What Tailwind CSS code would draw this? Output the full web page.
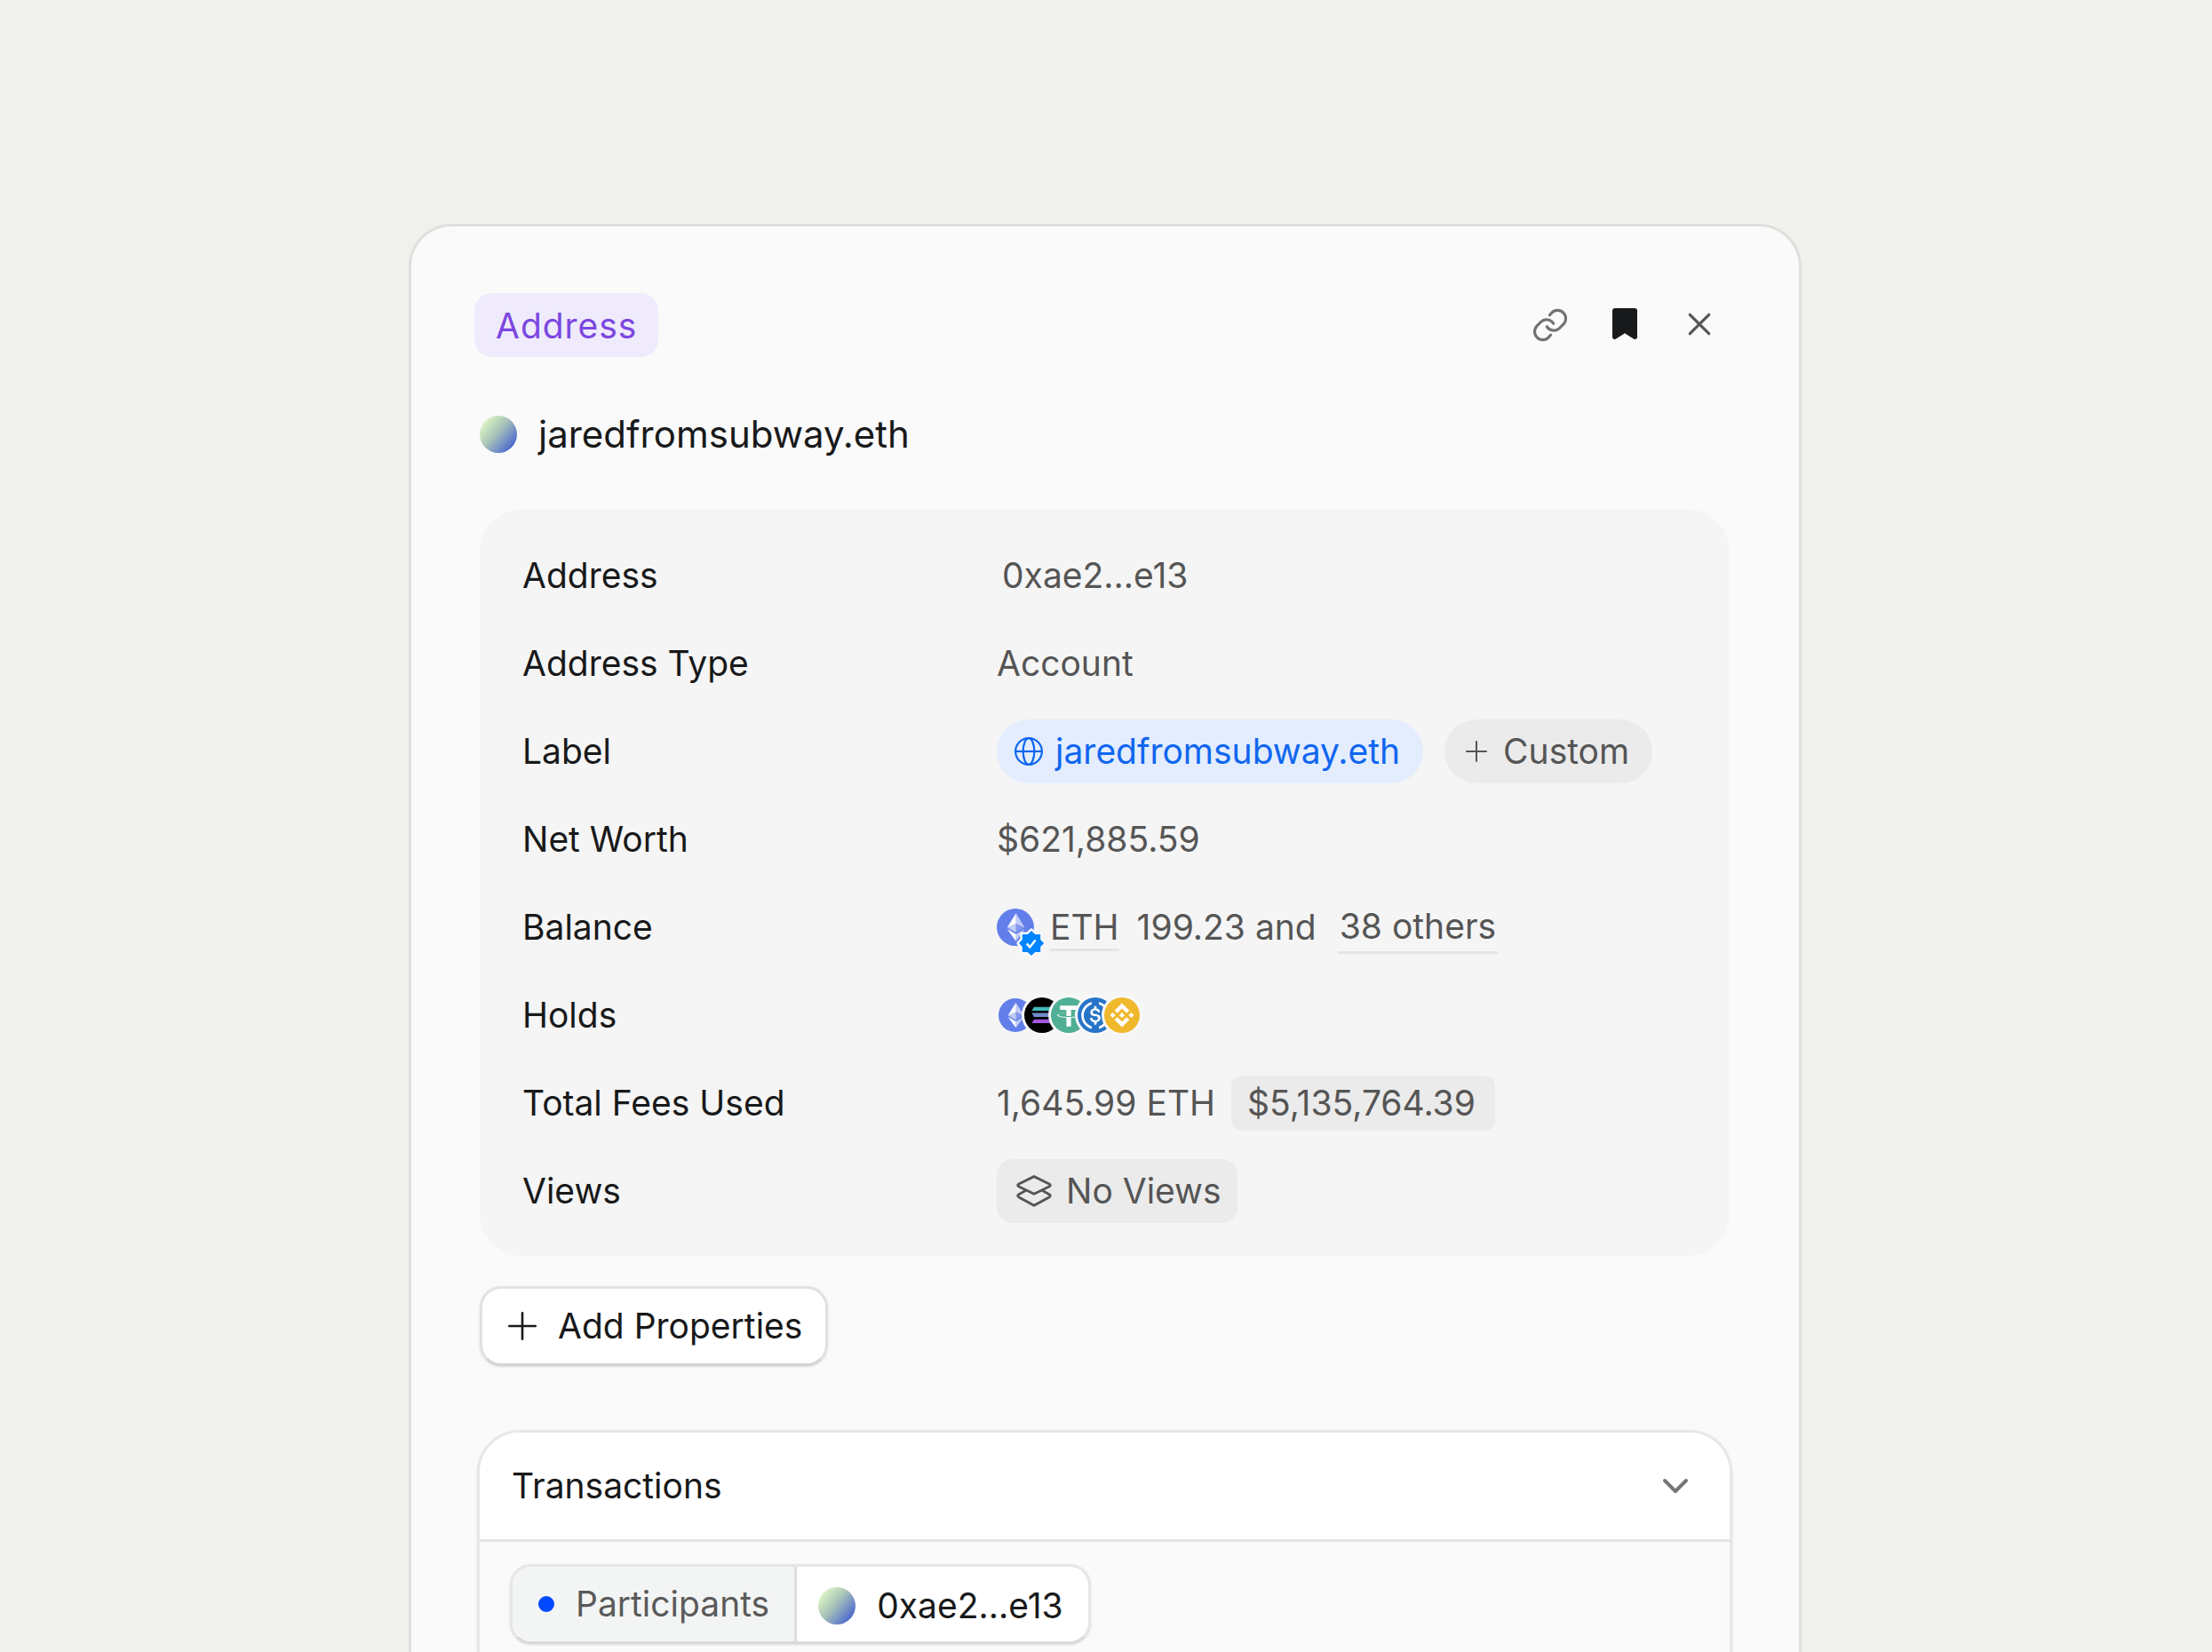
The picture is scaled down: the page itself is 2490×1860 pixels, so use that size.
<!DOCTYPE html>
<html lang="en">
<head>
<meta charset="utf-8">
<meta name="viewport" content="width=device-width, initial-scale=1">
<title>jaredfromsubway.eth</title>
<script src="https://cdn.jsdelivr.net/npm/@tailwindcss/browser@4"></script>
</head>
<body class="bg-[#f0f1ec] font-['Inter',sans-serif] text-[39px] leading-[48px] text-[#18191a]">

<!-- Shared icon shapes -->
<svg class="hidden" aria-hidden="true">
  <symbol id="eth" viewBox="0 0 32 32">
    <circle cx="16" cy="16" r="16" fill="#627eea"/>
    <g fill="#fff">
      <path fill-opacity=".602" d="M16.498 4v8.87l7.497 3.35z"/>
      <path d="M16.498 4L9 16.22l7.498-3.35z"/>
      <path fill-opacity=".602" d="M16.498 21.968v6.027L24 17.616z"/>
      <path d="M16.498 27.995v-6.028L9 17.616z"/>
      <path fill-opacity=".2" d="M16.498 20.573l7.497-4.353-7.497-3.348z"/>
      <path fill-opacity=".602" d="M9 16.22l7.498 4.353v-7.701z"/>
    </g>
  </symbol>
</svg>

<main class="flex h-screen justify-center overflow-hidden pt-[252px] pr-0.5">
  <article class="flex w-full max-w-[1568px] flex-col rounded-t-[48px] border-[3px] border-b-0 border-[#dfe0dc] bg-[#fafafa] pt-[75px] pr-[78px] pl-[77px]">

    <header class="-mr-2 -ml-1.5 flex items-center justify-between">
      <span class="flex h-[72px] items-center rounded-[20px] bg-[#efebfc] px-6 pt-0.5 tracking-wide text-[#7c47e0]">Address</span>
      <div class="flex">
        <button type="button" aria-label="Copy link" class="grid h-[72px] w-[84px] place-items-center text-[#727272]">
          <svg class="size-[38px]" viewBox="0 0 38.4 38.4" fill="none" stroke="currentColor" stroke-width="3.2" stroke-linecap="round">
            <path id="chain" d="M18.7 7.8l2.3-2.6a9.3 9.3 0 0 1 13.2 13.2l-4.500 4.400a9.300 9.300 0 0 1-14.200-1.800"/>
            <use href="#chain" transform="rotate(180 19.2 19.2)"/>
          </svg>
        </button>
        <button type="button" aria-label="Bookmark" class="grid h-[70px] w-[84px] place-items-center">
          <svg class="h-9 w-7" viewBox="0 0 28 36" fill="currentColor"><path d="M3 0h22a3 3 0 0 1 3 3v29.6c0 2-2 3.100-3.700 2.100L14 28.300 3.700 34.700C2 35.700 0 34.600 0 32.600V3a3 3 0 0 1 3-3z"/></svg>
        </button>
        <button type="button" aria-label="Close" class="grid h-[70px] w-[84px] place-items-center text-[#555]">
          <svg class="size-[26px]" viewBox="0 0 26 26" fill="none" stroke="currentColor" stroke-width="3.200" stroke-linecap="round"><path d="M2.300 2.300l21.400 21.400M23.700 2.300L2.300 23.700"/></svg>
        </button>
      </div>
    </header>

    <div class="mt-[60px] flex h-[54px] items-center gap-6">
      <span class="size-[42px] rounded-full bg-linear-[130deg] from-[#d9f2c4] from-15% via-[#a9c4b8] via-45% to-[#4460d0] to-90%"></span>
      <h1 class="text-[42px]">jaredfromsubway.eth</h1>
    </div>

    <dl class="mt-[57px] rounded-[48px] bg-[#f5f5f5] px-12 pt-[25px] pb-6">
      <div class="flex h-[99px] items-center">
        <dt class="w-[534px]">Address</dt>
        <dd class="pl-1.5 text-[#555]">0xae2...e13</dd>
      </div>
      <div class="flex h-[99px] items-center">
        <dt class="w-[534px]">Address Type</dt>
        <dd class="text-[#555]">Account</dd>
      </div>
      <div class="flex h-[99px] items-center">
        <dt class="w-[534px]">Label</dt>
        <dd class="flex gap-6">
          <a href="#" class="flex h-[72px] items-center gap-3.5 rounded-full bg-[#e3edfd] pr-[26px] pl-5 text-[#0f66f0]">
            <svg class="size-8" viewBox="0 0 32 32" fill="none" stroke="currentColor" stroke-width="2.200"><circle cx="16" cy="16" r="14.900"/><ellipse cx="16" cy="16" rx="6.300" ry="14.900"/><path d="M1 16h30"/></svg>
            jaredfromsubway.eth
          </a>
          <button type="button" class="flex h-[72px] items-center gap-[18px] rounded-full bg-[#ebebeb] pr-[26px] pl-6 text-[#555]">
            <svg class="size-6" viewBox="0 0 24 24" fill="none" stroke="currentColor" stroke-width="2" stroke-linecap="round"><path d="M12 1v22M1 12h22"/></svg>
            Custom
          </button>
        </dd>
      </div>
      <div class="flex h-[99px] items-center">
        <dt class="w-[534px]">Net Worth</dt>
        <dd class="text-[#555]">$621,885.59</dd>
      </div>
      <div class="flex h-[99px] items-center">
        <dt class="w-[534px]">Balance</dt>
        <dd class="flex items-center text-[#555]">
          <span class="relative">
            <svg class="size-[42px]"><use href="#eth"/></svg>
            <svg class="absolute top-[21px] left-[21px] size-9" viewBox="0 0 36 36">
              <path d="M18 4l4.200 4h6v6l4 4-4 4.100v6h-6L18 32l-4.200-3.900h-6v-6L4 18l3.800-4V8h6z" fill="#0085ff" stroke="#fafafa" stroke-width="5" stroke-linejoin="round" paint-order="stroke"/>
              <path d="M12.800 18.400l3.400 4 6.400-8" fill="none" stroke="#fff" stroke-width="2.400"/>
            </svg>
          </span>
          <a href="#" class="mt-1 ml-[18px] border-b-[3px] border-[#e2e5e4]">ETH</a>
          <span class="ml-5">199.23 and</span>
          <a href="#" class="mt-1.5 ml-6 border-b-[3px] border-[#e2e5e4] px-0.5 pb-1">38 others</a>
        </dd>
      </div>
      <div class="flex h-[99px] items-center">
        <dt class="w-[534px]">Holds</dt>
        <dd class="flex items-center">
          <svg class="ml-0.5 size-[38px]" role="img" aria-label="Ethereum"><use href="#eth"/></svg>
          <svg class="-ml-3 size-[46px]" viewBox="-3 -3 46 46" role="img" aria-label="Solana">
            <circle cx="20" cy="20" r="23" fill="#f8f8f8"/><circle cx="20" cy="20" r="20"/>
            <path d="M11 10.700h20.500l-2.600 4.300H8.400z" fill="#3fb9b8"/>
            <path d="M8.400 17.400h20.500l2.600 4.500H11z" fill="#718ccc"/>
            <path d="M11 24.700h20.500l-2.600 4.300H8.400z" fill="#a557e2"/>
          </svg>
          <svg class="-ml-4 size-[46px]" viewBox="-2.400 -2.400 36.800 36.800" role="img" aria-label="Tether">
            <circle cx="16" cy="16" r="18.400" fill="#f8f8f8"/><circle cx="16" cy="16" r="16" fill="#50af95"/>
            <path fill="#fff" transform="translate(-.9 -.9) scale(1.060)" d="M17.922 17.383v-.002c-.11.008-.677.042-1.942.042-1.010 0-1.721-.03-1.971-.042v.003c-3.888-.171-6.790-.848-6.790-1.658 0-.809 2.902-1.486 6.790-1.660v2.644c.254.018.982.061 1.988.061 1.207 0 1.812-.05 1.925-.06v-2.643c3.880.173 6.775.85 6.775 1.658 0 .81-2.895 1.485-6.775 1.657m0-3.590v-2.366h5.414V7.819H8.595v3.608h5.414v2.365c-4.400.202-7.709 1.074-7.709 2.118 0 1.044 3.309 1.915 7.709 2.118v7.582h3.913v-7.584c4.393-.202 7.694-1.073 7.694-2.116 0-1.043-3.301-1.914-7.694-2.117"/>
          </svg>
          <svg class="-ml-4 size-[46px]" viewBox="-2.400 -2.400 36.800 36.800" role="img" aria-label="USD Coin">
            <circle cx="16" cy="16" r="18.400" fill="#f8f8f8"/><circle cx="16" cy="16" r="16" fill="#2775c9"/>
            <g fill="#fff" transform="translate(-2.400 -2.200) scale(1.150)">
              <path d="M20.022 18.124c0-2.124-1.280-2.852-3.840-3.156-1.828-.243-2.193-.728-2.193-1.578 0-.85.61-1.396 1.828-1.396 1.097 0 1.707.364 2.011 1.275a.458.458 0 0 0 .427.303h.975a.416.416 0 0 0 .427-.425v-.06a3.040 3.040 0 0 0-2.743-2.489V9.142c0-.243-.183-.425-.487-.486h-.915c-.243 0-.426.182-.487.486v1.396c-1.829.242-2.986 1.456-2.986 2.974 0 2.002 1.218 2.791 3.778 3.095 1.707.303 2.255.668 2.255 1.639 0 .97-.853 1.638-2.011 1.638-1.585 0-2.133-.667-2.316-1.578-.06-.242-.244-.364-.427-.364h-1.036a.416.416 0 0 0-.426.425v.06c.243 1.518 1.219 2.610 3.230 2.914v1.457c0 .242.183.425.487.485h.915c.243 0 .426-.182.487-.485V21.340c1.829-.303 3.047-1.578 3.047-3.217z"/>
              <path d="M12.892 24.497c-4.754-1.700-7.192-6.980-5.424-11.653.914-2.550 2.925-4.491 5.424-5.402.244-.121.365-.303.365-.607v-.85c0-.242-.121-.424-.365-.485-.061 0-.183 0-.244.06a10.895 10.895 0 0 0-7.130 13.717c1.096 3.400 3.717 6.010 7.130 7.102.244.121.488 0 .548-.243.061-.06.061-.122.061-.243v-.85c0-.182-.182-.424-.365-.546zm6.460-18.936c-.244-.122-.488 0-.548.242-.061.061-.061.122-.061.243v.85c0 .243.182.485.365.607 4.754 1.700 7.192 6.980 5.424 11.653-.914 2.550-2.925 4.491-5.424 5.402-.244.121-.365.303-.365.607v.85c0 .242.121.424.365.485.061 0 .183 0 .244-.06a10.895 10.895 0 0 0 7.130-13.717c-1.096-3.460-3.778-6.070-7.130-7.162z"/>
            </g>
          </svg>
          <svg class="-ml-4 size-[46px]" viewBox="-2.400 -2.400 36.800 36.800" role="img" aria-label="BNB">
            <circle cx="16" cy="16" r="18.400" fill="#f8f8f8"/><circle cx="16" cy="16" r="16" fill="#f0b82d"/>
            <path fill="#fff" transform="translate(-1.300 -1.300) scale(1.080)" d="M12.116 14.404L16 10.520l3.886 3.886 2.260-2.260L16 6l-6.144 6.144 2.260 2.260zM6 16l2.260-2.260L10.520 16l-2.260 2.260L6 16zm6.116 1.596L16 21.480l3.886-3.886 2.260 2.259L16 26l-6.144-6.144-.003-.003 2.263-2.257zM21.480 16l2.260-2.260L26 16l-2.260 2.260L21.480 16zm-3.188-.002h.002V16L16 18.294l-2.291-2.290-.004-.004.004-.003.401-.402.195-.195L16 13.706l2.293 2.293z"/>
          </svg>
        </dd>
      </div>
      <div class="flex h-[99px] items-center">
        <dt class="w-[534px]">Total Fees Used</dt>
        <dd class="flex items-center gap-[18px] text-[#555]">1,645.99 ETH <span class="flex h-[62px] items-center rounded-xl bg-[#ebebeb] pr-[22px] pl-[18px]">$5,135,764.39</span></dd>
      </div>
      <div class="flex h-[99px] items-center">
        <dt class="w-[534px]">Views</dt>
        <dd>
          <button type="button" class="flex h-[72px] items-center gap-4 rounded-[18px] bg-[#ebebeb] pr-[18px] pl-[22px] text-[#555]">
            <svg class="h-9 w-10" viewBox="0 0 40 36" fill="none" stroke="currentColor" stroke-width="2.900" stroke-linejoin="round" stroke-linecap="round">
              <path d="M20 1.600L37 10q2.600 1.500 0 3L20 21.200 3 13q-2.600-1.500 0-3z"/>
              <path d="M10.500 17.500L3 21.700q-2.600 1.500 0 3.200l17 9.400 17-9.400q2.600-1.700 0-3.200l-7.500-4.200"/>
            </svg>
            No Views
          </button>
        </dd>
      </div>
    </dl>

    <button type="button" class="mt-[34px] flex h-[90px] items-center gap-6 self-start rounded-3xl border-[3px] border-[#e2e2e2] border-b-[#d4d4d4] bg-white pr-[26px] pl-[29px] shadow-sm">
      <svg class="size-8" viewBox="0 0 32 32" fill="none" stroke="currentColor" stroke-width="2.600" stroke-linecap="round"><path d="M16 1.300v29.400M1.300 16h29.400"/></svg>
      Add Properties
    </button>

    <section class="-mx-[3px] mt-[72px] flex-1 overflow-hidden rounded-t-[48px] border-[3px] border-b-0 border-[#e7e7e7] shadow-sm">
      <button type="button" class="flex h-[123px] w-full items-center justify-between border-b-[3px] border-[#e5e5e5] bg-white pr-[46px] pl-9">
        Transactions
        <svg class="h-[18px] w-[30px]" viewBox="0 0 30 18" fill="none" stroke="#757575" stroke-width="4" stroke-linecap="round" stroke-linejoin="round"><path d="M3 3l12 12L27 3"/></svg>
      </button>
      <div class="px-[34px] pt-[25px]">
        <div class="flex h-[90px] w-fit overflow-hidden rounded-3xl border-[3px] border-[#e6e6e6] border-b-[#dadada] bg-white shadow-sm">
          <span class="flex items-center gap-6 border-r-[3px] border-[#dcdcdc] bg-[#f3f5f4] pr-7 pl-[29px] text-[#5a5a5a]">
            <span class="size-[18px] rounded-full bg-[#0049ff]"></span>
            Participants
          </span>
          <button type="button" class="flex items-center gap-6 pt-1 pr-7 pl-6">
            <span class="size-[42px] rounded-full bg-linear-[130deg] from-[#d9f2c4] from-15% via-[#a9c4b8] via-45% to-[#4460d0] to-90%"></span>
            0xae2...e13
          </button>
        </div>
      </div>
    </section>
  </article>
</main>
</body>
</html>
